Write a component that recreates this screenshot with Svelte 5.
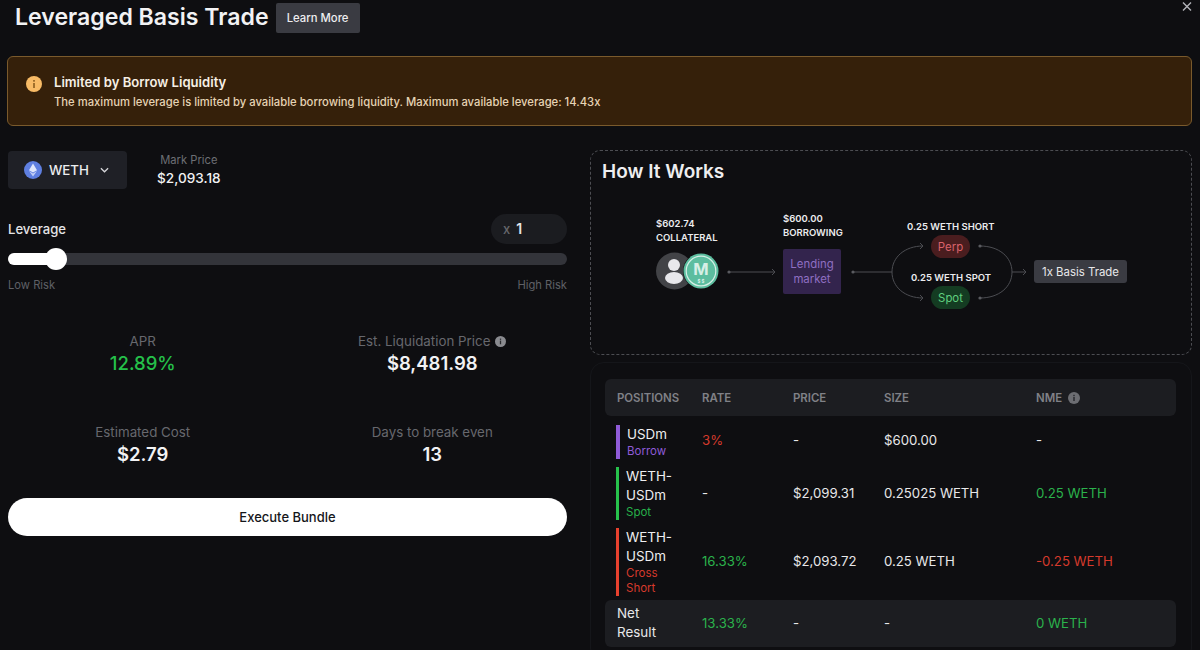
<script>
	const stats = [
		{ label: "APR", value: "12.89%", green: true },
		{ label: "Est. Liquidation Price", value: "$8,481.98", info: true },
		{ label: "Estimated Cost", value: "$2.79" },
		{ label: "Days to break even", value: "13" }
	];

	const rows = [
		{ name: "USDm", kind: "Borrow", tone: "purple", rate: "3%", rateTone: "red", price: "-", size: "$600.00", nme: "-", nmeTone: "" },
		{ name: "WETH-USDm", kind: "Spot", tone: "green", rate: "-", rateTone: "", price: "$2,099.31", size: "0.25025 WETH", nme: "0.25 WETH", nmeTone: "green" },
		{ name: "WETH-USDm", kind: "Cross Short", tone: "red", rate: "16.33%", rateTone: "green", price: "$2,093.72", size: "0.25 WETH", nme: "-0.25 WETH", nmeTone: "red" }
	];
</script>

<div class="modal">
	<svg class="close" viewBox="0 0 12 12" width="12" height="12">
		<path d="M2 1.500l8 8M10 1.500l-8 8" stroke="#b4b5ba" stroke-width="1.400" fill="none" />
	</svg>

	<header>
		<h1>Leveraged Basis Trade</h1>
		<button class="learn">Learn More</button>
	</header>

	<section class="alert">
		<svg class="alert-icon" viewBox="0 0 16 16" width="16" height="16">
			<circle cx="8" cy="8" r="8" fill="#f8bb66" />
			<rect x="7.200" y="7" width="1.600" height="5" fill="#8a5c1f" />
			<rect x="7.200" y="4" width="1.600" height="1.700" fill="#8a5c1f" />
		</svg>
		<div>
			<h2>Limited by Borrow Liquidity</h2>
			<p>The maximum leverage is limited by available borrowing liquidity. Maximum available leverage: 14.43x</p>
		</div>
	</section>

	<div class="columns">
		<div class="left">
			<div class="token-row">
				<button class="token">
					<svg viewBox="0 0 18 18" width="18" height="18">
						<circle cx="9" cy="9" r="9" fill="#5f7fe0" />
						<path d="M9 2.500L5 9.200 9 11.500l4-2.300z" fill="#dfe6fb" />
						<path d="M9 12.400L5 10.100 9 15.500l4-5.400z" fill="#c3cff5" />
					</svg>
					<span>WETH</span>
					<svg class="chev" viewBox="0 0 10 6" width="9" height="6">
						<path d="M1 1l4 4 4-4" stroke="#d6d6da" stroke-width="1.400" fill="none" />
					</svg>
				</button>
				<div class="mark">
					<span>Mark Price</span>
					<strong>$2,093.18</strong>
				</div>
			</div>

			<div class="lev-row">
				<span>Leverage</span>
				<div class="lev-input"><i>x</i><b>1</b></div>
			</div>
			<div class="slider">
				<div class="fill"></div>
				<div class="knob"></div>
			</div>
			<div class="risk">
				<span>Low Risk</span>
				<span>High Risk</span>
			</div>

			<div class="stats">
				{#each stats as s}
					<div class="stat">
						<span class="stat-label">
							{s.label}
							{#if s.info}
								<svg viewBox="0 0 12 12" width="11" height="11">
									<circle cx="6" cy="6" r="6" fill="#8a8b90" />
									<rect x="5.300" y="5" width="1.400" height="4" fill="#2a2b2f" />
									<rect x="5.300" y="2.800" width="1.400" height="1.400" fill="#2a2b2f" />
								</svg>
							{/if}
						</span>
						<span class="stat-value" class:green={s.green}>{s.value}</span>
					</div>
				{/each}
			</div>

			<button class="execute">Execute Bundle</button>
		</div>

		<div class="right">
			<section class="how">
				<h3>How It Works</h3>
				<div class="diagram">
					<svg class="wires" viewBox="0 0 600 205" width="600" height="205">
						<g fill="none" stroke="#4c4d52" stroke-width="1">
							<path d="M138 121h46M181 118l3 3-3 3" />
							<path d="M262 121h39" />
							<path d="M332 95C314 95 301 106 301 121C301 136 314 147 332 147M329 92l3 3-3 3M329 144l3 3-3 3" />
							<path d="M389 95C408 95 421 106 421 121C421 136 408 147 389 147M421 121h14M432 118l3 3-3 3" />
						</g>
						<g fill="#5a5b60">
							<circle cx="138" cy="121" r="1.600" />
							<circle cx="262" cy="121" r="1.600" />
							<circle cx="389" cy="95" r="1.600" />
							<circle cx="389" cy="147" r="1.600" />
						</g>
					</svg>
					<div class="cap c1">$602.74<br />COLLATERAL</div>
					<div class="cap c2">$600.00<br />BORROWING</div>
					<div class="cap c3">0.25 WETH SHORT</div>
					<div class="cap c4">0.25 WETH SPOT</div>

					<svg class="users" viewBox="0 0 66 40" width="66" height="40">
						<circle cx="19.500" cy="20" r="18.500" fill="#424347" />
						<circle cx="19" cy="14" r="6" fill="#e8e8ec" />
						<ellipse cx="19" cy="27" rx="9" ry="6" fill="#e8e8ec" />
						<circle cx="46" cy="20" r="18" fill="#0e0e11" />
						<circle cx="46" cy="20" r="17.500" fill="#5cbd9f" />
						<circle cx="46" cy="20" r="14.800" fill="none" stroke="#d6efe6" stroke-width="1.200" />
						<text x="46" y="23.500" class="coin-m">M</text>
						<text x="46" y="32" class="coin-s">$ $</text>
					</svg>

					<div class="node lending">Lending<br />market</div>
					<div class="node perp">Perp</div>
					<div class="node spot">Spot</div>
					<div class="node basis">1x Basis Trade</div>
				</div>
			</section>

			<section class="positions">
				<table>
					<thead>
						<tr>
							<th class="c-pos">POSITIONS</th>
							<th class="c-rate">RATE</th>
							<th class="c-price">PRICE</th>
							<th class="c-size">SIZE</th>
							<th>
								NME
								<svg viewBox="0 0 12 12" width="12" height="12">
									<circle cx="6" cy="6" r="6" fill="#6c6d72" />
									<rect x="5.300" y="5" width="1.400" height="4" fill="#26272b" />
									<rect x="5.300" y="2.800" width="1.400" height="1.400" fill="#26272b" />
								</svg>
							</th>
						</tr>
					</thead>
					<tbody>
						{#each rows as r}
							<tr>
								<td>
									<div class="pos {r.tone}">
										<div class="pos-text">
											<span class="pos-name">{r.name}</span>
											<span class="pos-kind">{r.kind}</span>
										</div>
									</div>
								</td>
								<td class={r.rateTone}>{r.rate}</td>
								<td>{r.price}</td>
								<td>{r.size}</td>
								<td class={r.nmeTone}>{r.nme}</td>
							</tr>
						{/each}
						<tr class="net">
							<td><span class="net-name">Net Result</span></td>
							<td class="green">13.33%</td>
							<td>-</td>
							<td>-</td>
							<td class="green">0 WETH</td>
						</tr>
					</tbody>
				</table>
			</section>
		</div>
	</div>
</div>

<style>
	:global(body) {
		margin: 0;
		background: #0e0e11;
		overflow: hidden;
	}

	.modal {
		position: relative;
		width: 1200px;
		height: 650px;
		overflow: hidden;
		box-sizing: border-box;
		padding: 3px 8px 0 8px;
		background: #0e0e11;
		color: #f2f2f4;
		font-family: Inter, "Liberation Sans", sans-serif;
	}

	.close {
		position: absolute;
		top: 1px;
		right: 7px;
	}

	header {
		display: flex;
		align-items: center;
		gap: 7px;
		height: 30px;
		padding-left: 7px;
	}

	h1 {
		margin: 0;
		font-size: 23.100px;
		font-weight: 600;
		line-height: 30px;
		position: relative;
		top: -1px;
	}

	.learn {
		height: 30px;
		width: 84px;
		padding: 0;
		border: 0;
		border-radius: 2px;
		background: #3a3b42;
		color: #eeeef0;
		font: 500 11.300px Inter, sans-serif;
	}

	.alert {
		display: flex;
		align-items: flex-start;
		gap: 12px;
		box-sizing: border-box;
		width: 1185px;
		height: 70px;
		margin: 23px 0 0 -1px;
		padding: 15px 18px 0;
		background: #35200a;
		border: 1px solid #7a5a2c;
		border-radius: 6px;
	}

	.alert-icon {
		flex: none;
		margin-top: 4px;
	}

	h2 {
		margin: 0 0 2px;
		font-size: 13.100px;
		font-weight: 600;
		line-height: 20px;
		color: #f6efe4;
	}

	.alert p {
		margin: 0;
		font-size: 11.250px;
		font-weight: 500;
		line-height: 16px;
		color: #e6d3b4;
	}

	.columns {
		display: flex;
		gap: 23px;
		margin-top: 24px;
	}

	.left {
		width: 559px;
		flex: none;
	}

	.token-row {
		display: flex;
		gap: 30px;
		margin-top: 1px;
	}

	.token {
		display: flex;
		align-items: center;
		gap: 7px;
		width: 119px;
		height: 38px;
		padding: 0 0 0 16px;
		border: 0;
		border-radius: 4px;
		background: #1f2026;
		color: #ecedef;
		font: 500 13.300px Inter, sans-serif;
	}

	.chev {
		margin-left: 4px;
	}

	.mark {
		display: flex;
		flex-direction: column;
		align-items: center;
		font-size: 11.200px;
		line-height: 17px;
		padding-top: 1px;
	}

	.mark span {
		color: #6d6e74;
	}

	.mark strong {
		font-size: 13.600px;
		font-weight: 500;
		line-height: 18px;
	}

	.lev-row {
		display: flex;
		justify-content: space-between;
		align-items: center;
		margin-top: 25px;
		font-size: 13.100px;
		font-weight: 500;
		color: #e4e4e7;
	}

	.lev-row > span {
		margin-top: -1px;
	}

	.lev-input {
		box-sizing: border-box;
		width: 76px;
		height: 30px;
		padding: 0 12px;
		display: flex;
		align-items: center;
		gap: 6px;
		border-radius: 15px;
		background: #1b1c20;
	}

	.lev-input i {
		font-style: normal;
		font-size: 13px;
		color: #66676c;
	}

	.lev-input b {
		font-size: 14px;
		font-weight: 600;
		margin-top: -2px;
	}

	.slider {
		position: relative;
		height: 12px;
		margin-top: 9px;
		border-radius: 6px;
		background: #33343a;
	}

	.fill {
		width: 48px;
		height: 12px;
		border-radius: 6px;
		background: #fff;
	}

	.knob {
		position: absolute;
		left: 37px;
		top: -5px;
		width: 22px;
		height: 22px;
		border-radius: 50%;
		background: #fff;
	}

	.risk {
		display: flex;
		justify-content: space-between;
		margin-top: 13px;
		font-size: 11.200px;
		line-height: 14px;
		color: #5f6066;
	}

	.stats {
		display: grid;
		grid-template-columns: 1fr 1fr;
		column-gap: 20px;
		row-gap: 47px;
		margin-top: 40px;
	}

	.stat {
		display: flex;
		flex-direction: column;
		align-items: center;
	}

	.stat-label {
		display: flex;
		align-items: center;
		gap: 5px;
		font-size: 13.350px;
		line-height: 18px;
		color: #67686e;
	}

	.stat-value {
		font-size: 18.500px;
		font-weight: 600;
		line-height: 26px;
	}

	.green {
		color: #2bb24c;
	}

	.stat-value.green {
		color: #25c04a;
		font-weight: 500;
	}

	.red {
		color: #d63a2c;
	}

	.execute {
		display: block;
		width: 100%;
		height: 38px;
		margin-top: 31px;
		border: 0;
		border-radius: 19px;
		background: #fff;
		color: #15161a;
		font: 500 13px Inter, sans-serif;
	}

	.right {
		width: 602px;
		flex: none;
		margin-right: -8px;
	}

	.how {
		box-sizing: border-box;
		height: 205px;
		border: 1px dashed #4c4d52;
		border-radius: 10px;
		position: relative;
	}

	h3 {
		margin: 0;
		padding: 9px 11px 0;
		font-size: 19px;
		font-weight: 600;
		line-height: 24px;
		color: #eeeef0;
	}

	.diagram {
		position: absolute;
		inset: 0;
	}

	.wires {
		position: absolute;
		left: 0;
		top: 0;
	}

	.cap {
		position: absolute;
		font-size: 9.500px;
		font-weight: 600;
		line-height: 14px;
		color: #ececee;
		white-space: nowrap;
	}

	.c1 { left: 65px; top: 66px; }
	.c2 { left: 192px; top: 61px; }
	.c3 { left: 316px; top: 69px; }
	.c4 { left: 320px; top: 120px; }

	.users {
		position: absolute;
		left: 64px;
		top: 100px;
	}

	.coin-m {
		font-size: 16.500px;
		font-weight: 700;
		fill: #d6efe6;
		text-anchor: middle;
	}

	.coin-s {
		font-size: 4.500px;
		font-weight: 700;
		fill: #d6efe6;
		text-anchor: middle;
	}

	.node {
		position: absolute;
		box-sizing: border-box;
		display: flex;
		align-items: center;
		justify-content: center;
		text-align: center;
		font-size: 11.400px;
	}

	.lending {
		left: 192px;
		top: 98px;
		width: 58px;
		height: 45px;
		line-height: 15px;
		border-radius: 2px;
		background: #33244d;
		color: #8f6fc2;
	}

	.perp {
		left: 340px;
		top: 84px;
		width: 39px;
		height: 23px;
		border-radius: 12px;
		background: #4a1d1f;
		color: #d9636b;
	}

	.spot {
		left: 340px;
		top: 135px;
		width: 39px;
		height: 23px;
		border-radius: 12px;
		background: #143c22;
		color: #5fcf7f;
	}

	.basis {
		left: 443px;
		top: 109px;
		width: 93px;
		height: 23px;
		border-radius: 3px;
		background: #3a3b42;
		color: #e8e8ea;
	}

	.positions {
		box-sizing: border-box;
		height: 300px;
		margin-top: 7px;
		padding: 16px 14px 0;
		border: 1px solid #15161a;
		border-radius: 14px;
	}

	table {
		width: 571px;
		border-collapse: collapse;
		table-layout: fixed;
		font-size: 13.200px;
		color: #e8e8ea;
	}

	th {
		box-sizing: border-box;
		height: 37px;
		padding: 0;
		background: #1c1d21;
		text-align: left;
		font-size: 11.400px;
		font-weight: 600;
		color: #808187;
	}

	th svg {
		vertical-align: -2.500px;
		margin-left: 3px;
	}

	th:first-child {
		border-radius: 6px 0 0 6px;
	}

	th:last-child {
		border-radius: 0 6px 6px 0;
	}

	.c-pos { width: 97px; padding-left: 12px; }
	.c-rate { width: 91px; }
	.c-price { width: 91px; }
	.c-size { width: 152px; }

	td {
		padding: 0 0 2px;
	}

	td:first-child {
		padding: 4px 0 4px 12px;
	}

	tbody tr:first-child td {
		padding-top: 2px;
	}

	tbody tr:first-child td:first-child {
		padding-top: 9px;
	}

	.pos {
		display: flex;
		padding-left: 7px;
		border-left: 3px solid;
		margin-left: -1px;
	}

	.pos.purple { border-left-width: 4px; border-color: #8f5bd8; color: #8f5bd8; }
	.pos.green { border-color: #27c24c; color: #27b04a; }
	.pos.red { border-color: #e8412e; color: #d63a2c; }

	.pos-text {
		display: flex;
		flex-direction: column;
		width: 60px;
	}

	.pos-name {
		font-size: 13.400px;
		line-height: 19px;
		color: #eeeef0;
	}

	.pos-kind {
		font-size: 11.500px;
		line-height: 15px;
	}

	.net td {
		background: #1c1d21;
		height: 45px;
		padding: 0 0 2px;
	}

	.net td:first-child {
		padding: 0 0 2px 12px;
		border-radius: 6px 0 0 6px;
	}

	.net td:last-child {
		border-radius: 0 6px 6px 0;
	}

	.net-name {
		display: block;
		width: 50px;
		font-size: 13.400px;
		line-height: 19px;
	}
</style>
